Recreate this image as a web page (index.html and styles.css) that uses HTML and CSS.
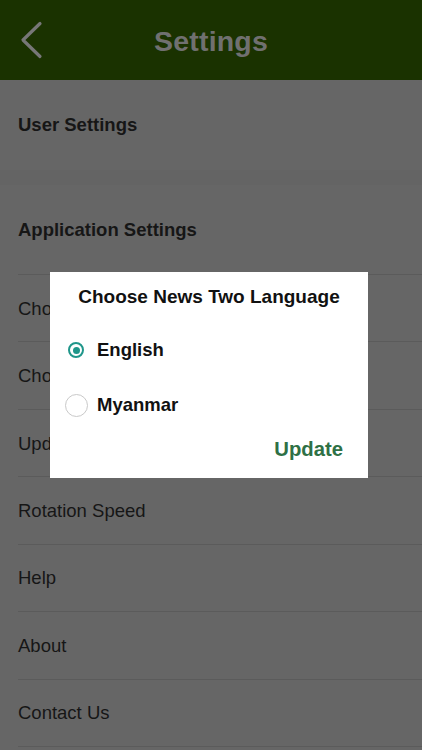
FILE: index.html
```html
<!DOCTYPE html>
<html>
<head>
<meta charset="utf-8">
<link rel="stylesheet" href="styles.css">
</head>
<body>
<div class="screen">
  <header class="navbar">
    <svg class="back" width="26" height="40" viewBox="0 0 26 40"><polyline points="21,3.5 4,20 21,36.5" fill="none" stroke="#777" stroke-width="3.2" stroke-linecap="round" stroke-linejoin="round"/></svg>
    <h1 class="title">Settings</h1>
  </header>
  <main class="list">
    <div class="row head">User Settings</div>
    <div class="gap"></div>
    <div class="row head lined">Application Settings</div>
    <div class="row item">Choose News One Language</div>
    <div class="row item">Choose News Two Language</div>
    <div class="row item">Update News</div>
    <div class="row item">Rotation Speed</div>
    <div class="row item">Help</div>
    <div class="row item">About</div>
    <div class="row item">Contact Us</div>
  </main>
  <div class="dialog">
    <div class="dlg-title">Choose News Two Language</div>
    <div class="option first">
      <span class="radio-box"><span class="radio checked"></span></span>
      <span class="opt-label">English</span>
    </div>
    <div class="option">
      <span class="radio-box"><span class="radio"></span></span>
      <span class="opt-label">Myanmar</span>
    </div>
    <div class="actions"><span class="update">Update</span></div>
  </div>
</div>
</body>
</html>
```
FILE: styles.css
```css
html, body {
  margin: 0;
  padding: 0;
  background: #666666;
}
.screen {
  position: relative;
  width: 422px;
  height: 750px;
  overflow: hidden;
  background: #666666;
  font-family: "Liberation Sans", Arial, sans-serif;
}
.navbar {
  height: 80px;
  background: #1a3200;
  display: flex;
  align-items: center;
  justify-content: center;
  position: relative;
}
.back {
  position: absolute;
  left: 19px;
  top: 20px;
}
.title {
  margin: 0;
  color: #707070;
  font-size: 28.5px;
  font-weight: bold;
  letter-spacing: 0.2px;
  line-height: 1;
  padding-top: 2px;
}
.list {
  display: flex;
  flex-direction: column;
}
.row {
  box-sizing: border-box;
  display: flex;
  align-items: center;
  color: #161616;
  font-size: 18.5px;
  margin-left: 18px;
}
.head {
  height: 90px;
  font-weight: bold;
}
.gap {
  height: 15px;
  background: #646464;
}
.lined {
  border-bottom: 1px solid #5b5b5b;
}
.item {
  height: 67.43px;
  border-bottom: 1px solid #5b5b5b;
  padding-top: 1px;
}
.dialog {
  position: absolute;
  left: 50px;
  top: 272px;
  width: 318px;
  height: 206px;
  box-sizing: border-box;
  background: #ffffff;
  padding: 13px 25px 0 11px;
  display: flex;
  flex-direction: column;
}
.dlg-title {
  height: 24px;
  line-height: 24px;
  text-align: center;
  font-weight: bold;
  font-size: 19px;
  color: #111;
  margin: 0 -25px 0 -11px;
}
.option {
  height: 55px;
  display: flex;
  align-items: center;
  gap: 6px;
}
.option.first {
  margin-top: 13.5px;
}
.radio-box {
  width: 30px;
  display: flex;
  justify-content: center;
  align-items: center;
}
.radio {
  box-sizing: border-box;
  width: 23px;
  height: 23px;
  border-radius: 50%;
  border: 1.6px solid #c9c9c9;
}
.radio.checked {
  width: 16px;
  height: 16px;
  border: 2.5px solid #1f968a;
  position: relative;
}
.radio.checked::after {
  content: "";
  position: absolute;
  left: 50%;
  top: 50%;
  width: 7px;
  height: 7px;
  margin: -3.5px 0 0 -3.5px;
  border-radius: 50%;
  background: #1f968a;
}
.opt-label {
  font-weight: bold;
  font-size: 18.5px;
  color: #111;
}
.actions {
  margin-top: 4.5px;
  height: 24px;
  display: flex;
  justify-content: flex-end;
  align-items: center;
}
.update {
  font-weight: bold;
  font-size: 20.3px;
  color: #2e7045;
}
```
